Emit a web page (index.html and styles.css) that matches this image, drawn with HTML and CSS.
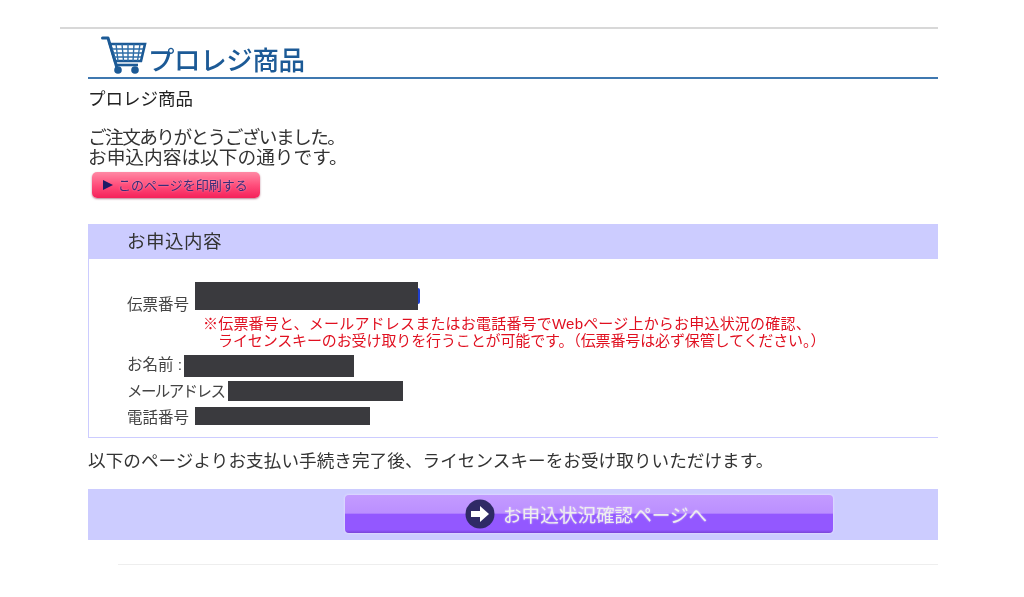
FILE: index.html
```html
<!DOCTYPE html>
<html lang="ja">
<head>
<meta charset="utf-8">
<title>プロレジ商品</title>
<link rel="stylesheet" href="styles.css">
</head>
<body>
<div class="page">
  <header class="head">
    <svg class="cart" width="46" height="40" viewBox="0 0 46 40" aria-hidden="true">
      <path d="M1.500 3H7l9 30" fill="none" stroke="#1c5a96" stroke-width="3" stroke-linecap="round" stroke-linejoin="round"/>
      <path d="M16 30h21" stroke="#1c5a96" stroke-width="2.600"/>
      <path d="M9 9h35l-4 17H14z" fill="none" stroke="#1c5a96" stroke-width="2.600"/>
      <path d="M11 14h31M12 18h29M13 22h27M15 9l2 17M21 9l1.500 17M27 9v17M33 9l-1 17M39 9l-2.500 17" fill="none" stroke="#2f6ea8" stroke-width="1.400"/>
      <circle cx="17" cy="35" r="3.800" fill="#1c5a96"/>
      <circle cx="34" cy="35" r="3.800" fill="#1c5a96"/>
    </svg>
    <span class="logo-text">プロレジ商品</span>
  </header>
  <main class="main">
    <h1 class="title">プロレジ商品</h1>
    <p class="lead"><span class="lead-first">ご注文ありがとうございました。</span><br>お申込内容は以下の通りです。</p>
    <button class="print" type="button"><span class="tri"></span>このページを印刷する</button>
    <section class="panel">
      <h2 class="panel-head">お申込内容</h2>
      <div class="panel-body">
        <div class="row row-slip"><span class="label">伝票番号</span><span class="mask mask-slip"></span><span class="arc"></span></div>
        <p class="note"><span class="note-first">※伝票番号と、メールアドレスまたはお電話番号でWebページ上からお申込状況の確認、</span><br><span class="note-in">ライセンスキーのお受け取りを行うことが可能です。（伝票番号は必ず保管してください。）</span></p>
        <div class="row row-name"><span class="label">お名前 :</span><span class="mask mask-name"></span></div>
        <div class="row row-mail"><span class="label">メールアドレス</span><span class="mask mask-mail"></span></div>
        <div class="row row-tel"><span class="label">電話番号</span><span class="mask mask-tel"></span></div>
      </div>
    </section>
    <p class="after">以下のページよりお支払い手続き完了後、ライセンスキーをお受け取りいただけます。</p>
    <div class="cta-bar">
      <a class="cta" href="#">
        <svg class="cta-icon" width="30" height="30" viewBox="0 0 30 30" aria-hidden="true">
          <circle cx="15" cy="15" r="14.500" fill="#2f2a66"/>
          <path d="M6 12h9V7l9 8-9 8v-5H6z" fill="#fff"/>
        </svg>
        <span class="cta-text">お申込状況確認ページへ</span>
      </a>
    </div>
  </main>
  <div class="foot-line"></div>
</div>
</body>
</html>
```

FILE: styles.css
```css
html, body { margin: 0; padding: 0; background: #fff; }
body {
  font-family: "Liberation Sans", "Noto Sans CJK JP", sans-serif;
  color: #333;
  height: 597px;
  overflow: hidden;
}
.page {
  width: 878px;
  margin: 27px 0 0 60px;
  border-top: 2px solid #d8d8d8;
  filter: blur(.4px);
}
.head {
  margin-left: 28px;
  height: 48px;
  border-bottom: 2px solid #3f78b0;
  display: flex;
  align-items: flex-end;
  padding-left: 13px;
}
.cart { margin: 0 1px 2px 0; flex: none; }
.logo-text {
  font-size: 26.500px;
  line-height: 32px;
  color: #1c5a96;
  font-weight: 500;
  letter-spacing: -0.4px;
}
.main { margin-left: 28px; }
.title {
  margin: 10px 0 0;
  font-size: 17.500px;
  line-height: 21px;
  font-weight: 400;
  color: #222;
}
.lead {
  margin: 18px 0 0;
  font-size: 18.700px;
  line-height: 20px;
}
.lead-first { letter-spacing: -1.600px; }
.print {
  display: flex;
  align-items: center;
  margin: 4px 0 0 4px;
  width: 168px;
  height: 26px;
  padding: 0 0 2px 11px;
  border: 0;
  border-radius: 5px;
  background: linear-gradient(#ff8aa5, #ff4f7c 50%, #f5215a);
  box-shadow: 0 1px 2px rgba(120, 0, 40, .5);
  color: #3b2b78;
  font: 13px/1 "Noto Sans CJK JP", sans-serif;
  white-space: nowrap;
  text-shadow: 0 0 2px rgba(255, 255, 255, .45);
}
.tri {
  width: 0;
  height: 0;
  margin: 2px 5px 0 0;
  border-left: 10px solid #1d1a66;
  border-top: 5px solid transparent;
  border-bottom: 5px solid transparent;
}
.panel {
  margin-top: 26px;
  border-left: 1px solid #ccccff;
  border-bottom: 1px solid #ccccff;
}
.panel-head {
  margin: 0;
  height: 35px;
  padding-left: 38px;
  background: #ccccff;
  font-size: 18.500px;
  line-height: 36px;
  font-weight: 400;
  letter-spacing: .5px;
}
.panel-body {
  height: 178px;
  padding: 23px 0 0 38px;
  box-sizing: border-box;
}
.row {
  display: flex;
  align-items: flex-start;
  color: #444;
  font-size: 15.500px;
  line-height: 20px;
}
.mask { display: block; background: #3a3a3e; }
.row-slip { height: 28px; }
.row-slip .label { margin: 13px 6px 0 0; }
.mask-slip { width: 223px; height: 28px; }
.arc {
  width: 2px;
  height: 16px;
  margin-top: 6px;
  border-radius: 0 2px 2px 0;
  background: #1f3fd0;
}
.note {
  margin: 5px 0 0 76px;
  font-size: 15px;
  line-height: 17px;
  color: #e01020;
  white-space: nowrap;
}
.note-first { letter-spacing: .2px; }
.note-in { margin-left: 15px; letter-spacing: -.12px; }
.row-name { margin-top: 6px; height: 22px; }
.row-name .label { margin-right: 2px; }
.mask-name { width: 170px; height: 22px; }
.row-mail { margin-top: 4px; height: 20px; }
.row-mail .label { margin: 1px 4px 0 0; letter-spacing: -1.600px; }
.mask-mail { width: 175px; height: 20px; }
.row-tel { margin-top: 6px; height: 18px; }
.row-tel .label { margin: 1px 6px 0 0; }
.mask-tel { width: 175px; height: 18px; }
.after {
  margin: 11px 0 0;
  font-size: 17.600px;
  line-height: 24px;
  letter-spacing: .05px;
}
.cta-bar {
  margin-top: 16px;
  height: 51px;
  background: #ccccff;
  padding: 6px 0 0 257px;
  box-sizing: border-box;
}
.cta {
  display: flex;
  align-items: center;
  gap: 8px;
  width: 488px;
  height: 38px;
  padding-left: 120px;
  box-sizing: border-box;
  border-radius: 4px;
  background: linear-gradient(#c39bff 0, #bb8fff 48%, #9358ff 50%, #9358ff 92%, #7a45d8 100%);
  box-shadow: 0 0 2px 1px rgba(225, 220, 255, .8);
  color: #eee;
  font-size: 18.600px;
  text-decoration: none;
  text-shadow: 0 0 2px rgba(255, 255, 255, .6);
}
.cta-icon { flex: none; }
.cta-text { margin-top: -2px; }
.foot-line {
  margin: 24px 0 0 58px;
  border-top: 1px solid #eee;
}
```
